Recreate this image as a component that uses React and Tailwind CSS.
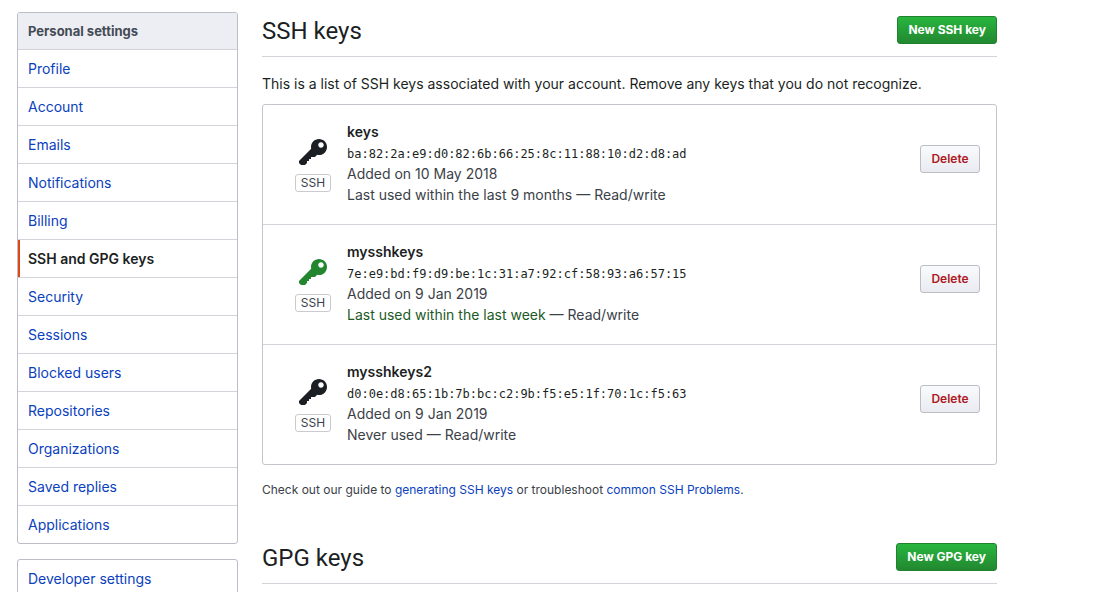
import React from "react";

const menuItems = [
  "Profile",
  "Account",
  "Emails",
  "Notifications",
  "Billing",
  "SSH and GPG keys",
  "Security",
  "Sessions",
  "Blocked users",
  "Repositories",
  "Organizations",
  "Saved replies",
  "Applications",
];

const sshKeys = [
  {
    title: "keys",
    fingerprint: "ba:82:2a:e9:d0:82:6b:66:25:8c:11:88:10:d2:d8:ad",
    added: "Added on 10 May 2018",
    used: "Last used within the last 9 months",
    recent: false,
  },
  {
    title: "mysshkeys",
    fingerprint: "7e:e9:bd:f9:d9:be:1c:31:a7:92:cf:58:93:a6:57:15",
    added: "Added on 9 Jan 2019",
    used: "Last used within the last week",
    recent: true,
  },
  {
    title: "mysshkeys2",
    fingerprint: "d0:0e:d8:65:1b:7b:bc:c2:9b:f5:e5:1f:70:1c:f5:63",
    added: "Added on 9 Jan 2019",
    used: "Never used",
    recent: false,
  },
];

function KeyIcon({ className }) {
  return (
    <svg className={className} viewBox="0 0 14 16" width="28" height="32" fill="currentColor" aria-hidden="true">
      <path
        fillRule="evenodd"
        d="M12.83 2.17C12.08 1.42 11.14 1.03 10 1c-1.13.03-2.08.42-2.83 1.17S6.04 3.86 6.01 5c0 .3.03.59.09.89L0 12v1l1 1h2l1-1v-1h1v-1h1v-1h2l1.09-1.11c.3.08.59.11.91.11 1.14-.03 2.08-.42 2.83-1.17S13.97 6.14 14 5c-.03-1.14-.42-2.08-1.17-2.83zM11 5.38c-.77 0-1.38-.61-1.38-1.38 0-.77.61-1.38 1.38-1.38.77 0 1.38.61 1.38 1.38 0 .77-.61 1.38-1.38 1.38z"
      />
    </svg>
  );
}

function MenuLink({ label, active }) {
  return (
    <a
      href="#"
      aria-current={active ? "page" : undefined}
      className={
        active
          ? "block border-l-2 border-l-[#dd4814] py-2 pr-2.5 pl-2 font-semibold text-[#1b1f23]"
          : "block px-2.5 py-2 text-[#0a41bd]"
      }
    >
      {label}
    </a>
  );
}

function Subhead({ title, action }) {
  return (
    <div className="flex h-[41px] items-start justify-between border-b border-[#d3d3da]">
      <h2 className="font-[Roboto,sans-serif] text-2xl leading-[30px] text-[#1b1f23]">{title}</h2>
      <button
        type="button"
        className="h-7 rounded-[3px] border border-[#20812f] bg-linear-to-b from-[#28b63e] to-[#228830] px-2.5 text-xs font-bold whitespace-nowrap text-white"
      >
        {action}
      </button>
    </div>
  );
}

function KeyRow({ item }) {
  return (
    <li className="flex items-start border-b border-[#d3d3da] py-4 pr-4 pl-8 last:border-b-0">
      <div className="mt-4 mr-4 flex w-9 shrink-0 flex-col items-center gap-[5px]">
        <KeyIcon className={item.recent ? "text-[#22862f]" : "text-[#1b1f23]"} />
        <span className="flex h-[18px] w-full items-center justify-center rounded-[3px] border border-[#c9cbcf] text-xs text-[#3b4148]">
          SSH
        </span>
      </div>
      <div className="min-w-0 grow pb-[3px] text-[#3b4148]">
        <strong className="block font-semibold text-[#1b1f23]">{item.title}</strong>
        <code className="block pt-[3px] font-['DejaVu_Sans_Mono',monospace] text-xs leading-[18px] text-[#1b1f23]">
          {item.fingerprint}
        </code>
        <span className="block">{item.added}</span>
        <span className="block">
          <span className={item.recent ? "text-[#1c5a26]" : undefined}>{item.used}</span> — Read/write
        </span>
      </div>
      <button
        type="button"
        className="mt-6 h-7 w-[60px] shrink-0 rounded-[3px] border border-[#bcbec4] bg-linear-to-b from-[#f9fafc] to-[#e9ebf1] text-xs font-semibold text-[#ad1a24]"
      >
        Delete
      </button>
    </li>
  );
}

export default function App() {
  return (
    <div className="flex max-w-[997px] items-start gap-6 bg-white pt-3 pl-[17px] font-[Inter,sans-serif] text-sm leading-[21px] text-[#1b1f23]">
      <aside className="w-[221px] shrink-0">
        <nav aria-label="Personal settings" className="mb-[15px] overflow-hidden rounded-[3px] border border-[#bcbdc9]">
          <h3 className="border-b border-[#d3d3da] bg-[#edeef4] px-2.5 pt-2 pb-[7px] text-[13px] leading-[21px] font-bold text-[#444b54]">
            Personal settings
          </h3>
          <ul className="divide-y divide-[#d3d3da]">
            {menuItems.map((label) => (
              <li key={label}>
                <MenuLink label={label} active={label === "SSH and GPG keys"} />
              </li>
            ))}
          </ul>
        </nav>
        <nav aria-label="Developer" className="overflow-hidden rounded-[3px] border border-[#bcbdc9]">
          <MenuLink label="Developer settings" active={false} />
        </nav>
      </aside>

      <main className="min-w-0 grow pt-1">
        <section>
          <Subhead title="SSH keys" action="New SSH key" />
          <p className="mt-4 mb-[10px]">
            This is a list of SSH keys associated with your account. Remove any keys that you do not recognize.
          </p>
          <ul className="rounded-[3px] border border-[#c3c5cc]">
            {sshKeys.map((item) => (
              <KeyRow key={item.title} item={item} />
            ))}
          </ul>
          <p className="mt-4 text-xs leading-[18px] text-[#3b4148]">
            Check out our guide to{" "}
            <a href="#" className="text-[#0a41bd]">
              generating SSH keys
            </a>{" "}
            or troubleshoot{" "}
            <a href="#" className="text-[#0a41bd]">
              common SSH Problems
            </a>
            .
          </p>
        </section>
        <section className="mt-11">
          <Subhead title="GPG keys" action="New GPG key" />
        </section>
      </main>
    </div>
  );
}
